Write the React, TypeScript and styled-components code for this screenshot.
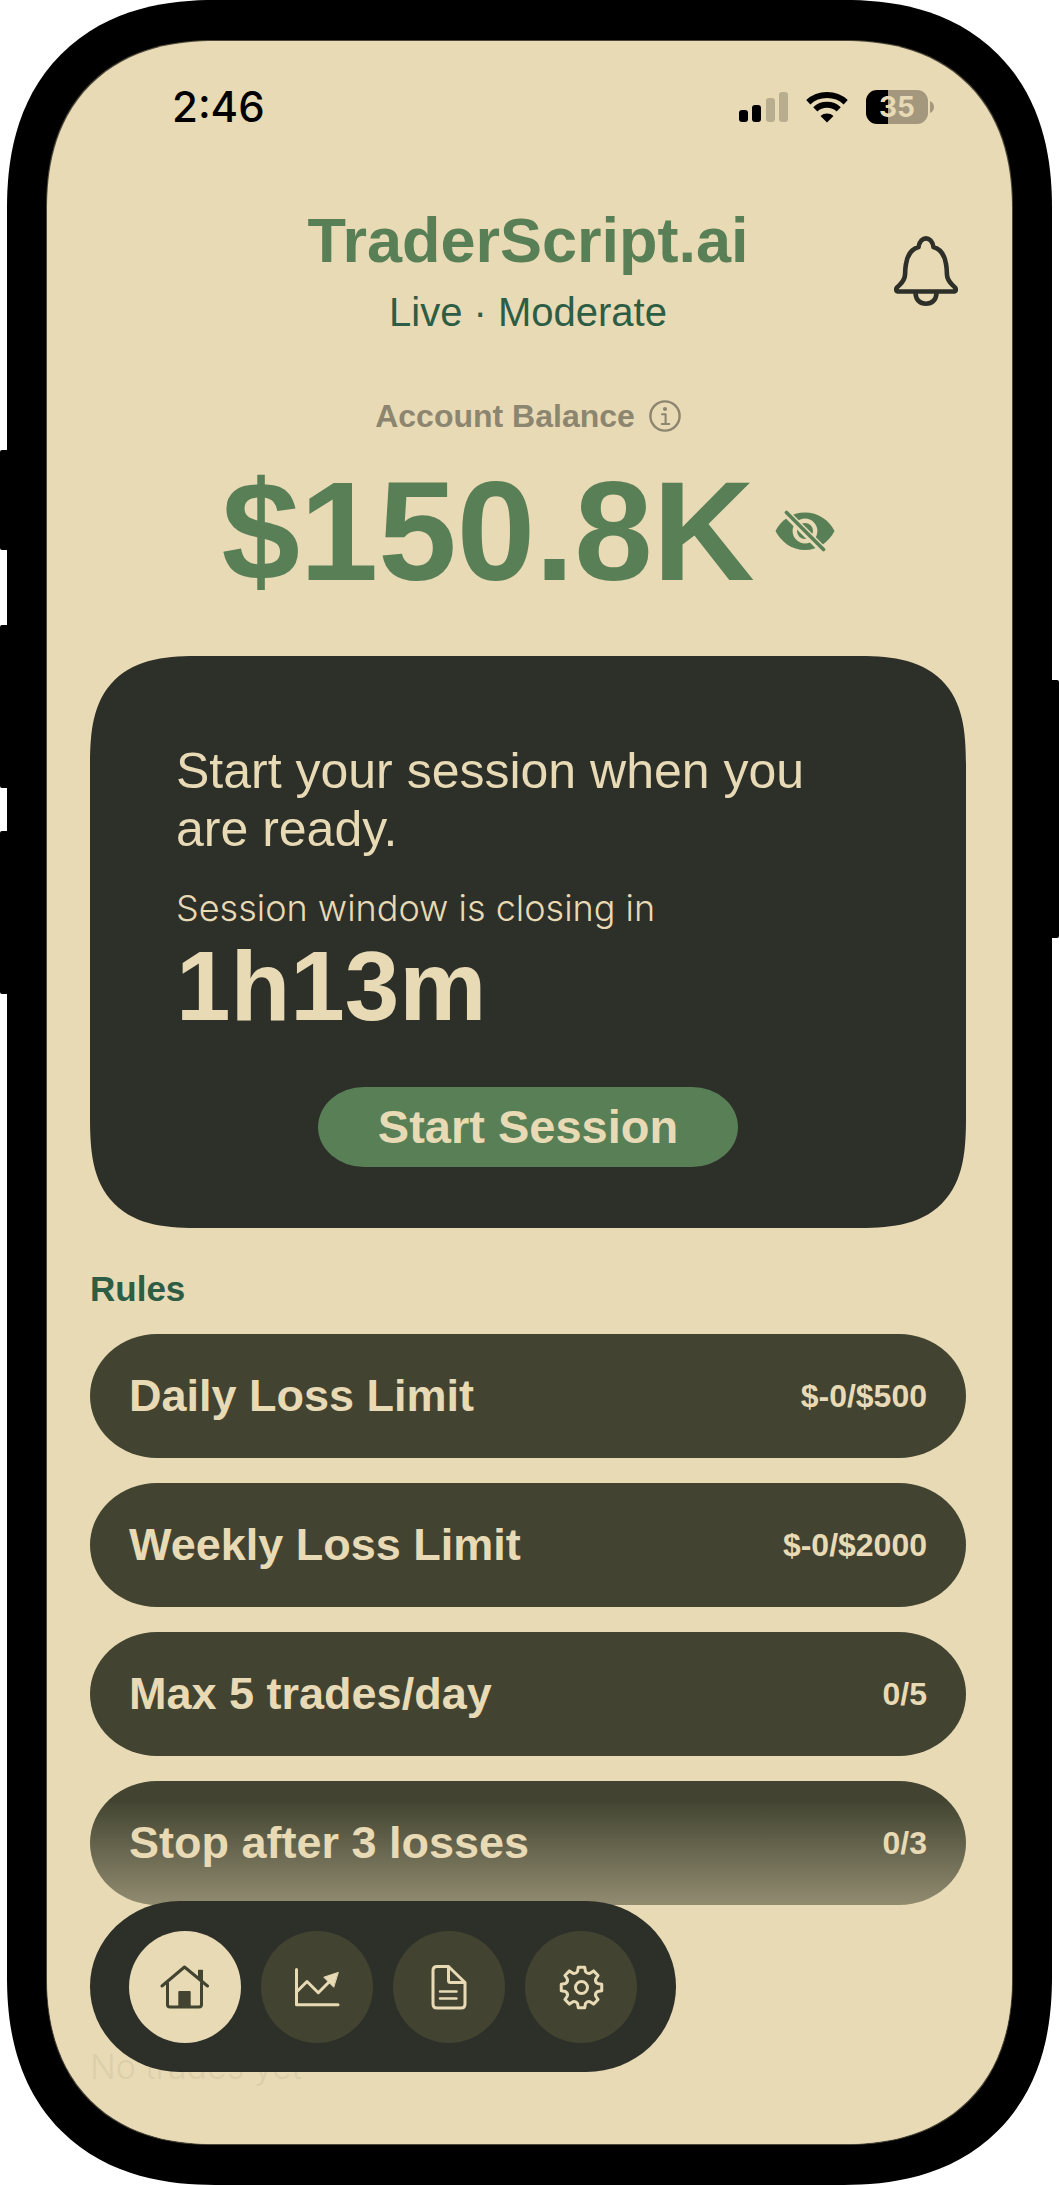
import React from "react";
import styled, { createGlobalStyle } from "styled-components";

const color = {
  cream: "#e8dab5",
  green: "#587f55",
  forest: "#2d5d45",
  ink: "#2d2f29",
  olive: "#424431",
  muted: "#8c8570",
};

const sans = `"Liberation Sans", Arial, Helvetica, sans-serif`;
const system = `Inter, "Liberation Sans", sans-serif`;

const GlobalStyle = createGlobalStyle`
  *, *::before, *::after { box-sizing: border-box; }
  body { margin: 0; background: #fff; font-family: ${sans}; color: ${color.ink}; }
  h1, h2, p, ul { margin: 0; padding: 0; }
  button { border: 0; padding: 0; background: none; font: inherit; color: inherit; cursor: pointer; }
  svg { display: block; }
`;

const Phone = styled.div`
  position: relative;
  margin: 0 7px;
  padding: 41px 40px;
  background: #000;
  border-radius: 190px;
  @supports (corner-shape: squircle) {
    border-radius: 208px;
    corner-shape: superellipse(1.2);
  }
`;

const SideKey = styled.span<{ $side: "left" | "right"; $top: number; $height: number }>`
  position: absolute;
  ${(p) => p.$side}: -7px;
  top: ${(p) => p.$top}px;
  width: 14px;
  height: ${(p) => p.$height}px;
  border-radius: 2px;
  background: #000;
`;

const Screen = styled.div`
  position: relative;
  overflow: hidden;
  background: ${color.cream};
  border-radius: 150px;
  box-shadow: 0 0 0 1px #4c4738;
  @supports (corner-shape: squircle) {
    border-radius: 168px;
    corner-shape: superellipse(1.2);
  }
`;

const StatusBar = styled.div`
  display: flex;
  align-items: center;
  justify-content: space-between;
  height: 132px;
  padding: 0 78px 0 125px;
`;

const Clock = styled.time`
  font: 500 42px/48px ${system};
  color: #000;
`;

const StatusIcons = styled.div`
  display: flex;
  align-items: center;
  gap: 18px;
`;

const Battery = styled.div`
  display: flex;
  align-items: center;
  gap: 2px;
`;

const BatteryBody = styled.div`
  display: grid;
  place-items: center;
  width: 62px;
  height: 34px;
  border-radius: 11px;
  background: linear-gradient(to right, #000 35%, #a3987d 35%);
  font: 700 28px/34px ${system};
  color: ${color.cream};
`;

const Content = styled.main`
  padding: 29px 46px 56px 43px;
`;

const Header = styled.header`
  display: grid;
  grid-template-columns: 1fr auto 1fr;
  align-items: center;
  padding: 0 8px;
`;

const Titles = styled.div`
  grid-column: 2;
  display: flex;
  flex-direction: column;
  align-items: center;
  gap: 6px;
`;

const Brand = styled.h1`
  font-size: 63px;
  line-height: 76px;
  font-weight: 700;
  color: ${color.green};
`;

const Mode = styled.p`
  font-size: 40px;
  line-height: 56px;
  color: ${color.forest};
`;

const BellButton = styled.button`
  justify-self: end;
`;

const Account = styled.section`
  display: flex;
  flex-direction: column;
  align-items: center;
  gap: 15px;
  margin-top: 56px;
`;

const AccountLabel = styled.div`
  display: flex;
  align-items: center;
  gap: 14px;
  color: ${color.muted};
  font-size: 32px;
  line-height: 40px;
  font-weight: 700;
`;

const BalanceRow = styled.div`
  display: flex;
  align-items: center;
  gap: 20px;
  color: ${color.green};
`;

const Balance = styled.p`
  font-size: 141px;
  line-height: 160px;
  font-weight: 700;
`;

const SessionCard = styled.section`
  display: flex;
  flex-direction: column;
  margin-top: 45px;
  padding: 86px 86px 61px;
  background: ${color.ink};
  color: ${color.cream};
  border-radius: 88px;
  @supports (corner-shape: squircle) {
    border-radius: 112px;
    corner-shape: superellipse(1.5);
  }
`;

const Prompt = styled.p`
  font-size: 50px;
  line-height: 58px;
`;

const WindowNote = styled.p`
  margin-top: 25px;
  font: 300 36px/50px ${system};
`;

const Countdown = styled.p`
  margin-top: 3px;
  font-size: 98px;
  line-height: 100px;
  font-weight: 700;
`;

const StartButton = styled.button`
  align-self: center;
  margin-top: 51px;
  padding: 0 60px;
  border-radius: 46px / 40px;
  background: ${color.green};
  font-size: 47px;
  line-height: 80px;
  font-weight: 700;
`;

const SectionTitle = styled.h2`
  margin-top: 41px;
  font-size: 35px;
  line-height: 40px;
  font-weight: 700;
  color: ${color.forest};
`;

const RuleList = styled.ul`
  display: flex;
  flex-direction: column;
  gap: 25px;
  margin-top: 25px;
  list-style: none;
`;

const Rule = styled.li`
  display: flex;
  align-items: center;
  justify-content: space-between;
  height: 124px;
  padding: 0 39px;
  border-radius: 67px / 62px;
  background: ${color.olive};
  color: ${color.cream};
  font-weight: 700;
`;

const RuleName = styled.span`
  font-size: 45px;
  line-height: 54px;
`;

const RuleValue = styled.span`
  font-size: 32px;
  line-height: 40px;
`;

const EmptyNote = styled.p`
  margin-top: 141px;
  font: 300 34px/42px ${system};
  color: ${color.olive};
`;

const Fade = styled.div`
  position: absolute;
  inset: auto 0 0;
  height: 344px;
  pointer-events: none;
  background: linear-gradient(
    to bottom,
    rgba(232, 218, 181, 0) 0,
    rgba(232, 218, 181, 0.48) 105px,
    rgba(232, 218, 181, 0.92) 220px
  );
`;

const TabBar = styled.nav`
  position: absolute;
  left: 43px;
  bottom: 72px;
  display: flex;
  gap: 20px;
  padding: 30px 39px 29px;
  border-radius: 90px / 86px;
  background: ${color.ink};
`;

const Tab = styled.button<{ $active?: boolean }>`
  display: grid;
  place-items: center;
  width: 112px;
  height: 112px;
  border-radius: 50%;
  background: ${(p) => (p.$active ? color.cream : color.olive)};
  color: ${(p) => (p.$active ? color.olive : color.cream)};
`;

const line = {
  fill: "none",
  stroke: "currentColor",
  strokeLinecap: "round" as const,
  strokeLinejoin: "round" as const,
};

const SignalIcon = () => (
  <svg width="49" height="32" viewBox="0 0 49 32" aria-hidden="true">
    <rect x="0" y="19" width="9" height="12" rx="3" fill="#000" />
    <rect x="13" y="14" width="9" height="17" rx="3" fill="#000" />
    <rect x="27" y="7" width="9" height="24" rx="3" fill="#b8ad8e" />
    <rect x="40" y="1" width="9" height="30" rx="3" fill="#b8ad8e" />
  </svg>
);

const WifiIcon = () => (
  <svg width="42" height="32" viewBox="0 0 42 32" fill="none" aria-hidden="true">
    <path d="M2.3 11.2C12.5 1.6 29.5 1.6 39.7 11.2" stroke="#000" strokeWidth="6" />
    <path d="M9.3 18.3C15.6 12.3 26.4 12.3 32.7 18.3" stroke="#000" strokeWidth="6" />
    <path d="M14.5 25C18 21.7 24 21.7 27.5 25L21 31.5Z" fill="#000" />
  </svg>
);

const BellIcon = () => (
  <svg width="64" height="70" viewBox="0 0 64 70" {...line} strokeWidth="4.6" aria-hidden="true">
    <path d="M5 55.5H59C62 55.5 62.5 53.5 61 51.5C58 48 53.5 46 53 39C52.6 35 53 33 52 28C50.5 18 46 13 39.5 11C38.5 5 35 2.4 32 2.4C29 2.4 25.5 5 24.5 11C18 13 13.5 18 12 28C11 33 11.4 35 11 39C10.5 46 6 48 3 51.5C1.5 53.5 2 55.5 5 55.5Z" />
    <path d="M21.5 57.5C22 64 26 67.7 32 67.7C38 67.7 42 64 42.5 57.5" />
  </svg>
);

const InfoIcon = () => (
  <svg width="32" height="32" viewBox="0 0 32 32" {...line} strokeWidth="2.4" aria-hidden="true">
    <circle cx="16" cy="16" r="14.6" />
    <circle cx="16" cy="9" r="2.1" fill="currentColor" stroke="none" />
    <path d="M13 14.2H16.6V23.8M12.8 24H20.2" strokeWidth="2.1" />
  </svg>
);

const EyeOffIcon = () => (
  <svg width="60" height="42" viewBox="0 0 60 42" aria-hidden="true">
    <path d="M0.5 21C6 10 17 2.5 30 2.5S54 10 59.5 21C54 32 43 40 30 40S6 32 0.5 21Z" fill="currentColor" />
    <circle cx="30" cy="21" r="10.2" fill="none" stroke={color.cream} strokeWidth="4.4" />
    <path d="M9 1L50 42" stroke={color.cream} strokeWidth="8" />
    <path d="M11.5 2.5L48.5 39.5" stroke="currentColor" strokeWidth="3.6" strokeLinecap="round" />
  </svg>
);

const HomeIcon = () => (
  <svg width="50" height="45" viewBox="0 0 50 45" {...line} strokeWidth="3" aria-hidden="true">
    <path d="M2 21L24.5 2L47.5 21" />
    <path d="M7.5 18V39.5Q7.5 42 10 42H39Q41.5 42 41.5 39.5V18" />
    <path d="M38 5.5Q38 4.7 38.8 4.7H42.2Q43 4.7 43 5.5V17L38 13Z" fill="currentColor" stroke="none" />
    <path d="M18.3 27Q18.3 26 19.3 26H29.7Q30.7 26 30.7 27V42H18.3Z" fill="currentColor" stroke="none" />
  </svg>
);

const ChartIcon = () => (
  <svg width="45" height="39" viewBox="0 0 45 39" {...line} strokeWidth="3" aria-hidden="true">
    <path d="M1.5 1.5V36.7H43" />
    <path d="M2 23.5L12 13.5L23.3 24.7L36 12" />
    <path d="M43 4.5L28.8 9.2L38.5 19Z" fill="currentColor" strokeWidth="1" />
  </svg>
);

const DocumentIcon = () => (
  <svg width="36" height="45" viewBox="0 0 36 45" {...line} strokeWidth="3" aria-hidden="true">
    <path d="M6 1.5H17.5L34 17.5V39Q34 43 30 43H6Q2 43 2 39V5.5Q2 1.5 6 1.5Z" />
    <path d="M17.5 2V15.5Q17.5 17.5 19.5 17.5H33.5" />
    <path d="M9 26.5H25.5M9 33.5H25.5" strokeWidth="2.5" />
  </svg>
);

const polar = (radius: number, degrees: number) => {
  const a = (degrees * Math.PI) / 180;
  return `${(22.5 + radius * Math.sin(a)).toFixed(2)} ${(22.5 - radius * Math.cos(a)).toFixed(2)}`;
};

// Eight teeth joined by shallow concave valleys.
const gearPath =
  Array.from({ length: 8 }, (_, i) => {
    const a = i * 45;
    return `${i ? "L" : "M"}${polar(16.5, a - 14)}L${polar(20.5, a - 9)}L${polar(20.5, a + 9)}L${polar(16.5, a + 14)}Q${polar(14.5, a + 22.5)} ${polar(16.5, a + 31)}`;
  }).join("") + "Z";

const GearIcon = () => (
  <svg width="45" height="45" viewBox="0 0 45 45" {...line} strokeWidth="3" aria-hidden="true">
    <path d={gearPath} />
    <circle cx="22.5" cy="22.5" r="6" />
  </svg>
);

const sideKeys = [
  { side: "left", top: 450, height: 100 },
  { side: "left", top: 625, height: 163 },
  { side: "left", top: 831, height: 163 },
  { side: "right", top: 680, height: 258 },
] as const;

const rules = [
  { name: "Daily Loss Limit", value: "$-0/$500" },
  { name: "Weekly Loss Limit", value: "$-0/$2000" },
  { name: "Max 5 trades/day", value: "0/5" },
  { name: "Stop after 3 losses", value: "0/3" },
];

const tabs = [
  { label: "Home", Icon: HomeIcon },
  { label: "Performance", Icon: ChartIcon },
  { label: "Journal", Icon: DocumentIcon },
  { label: "Settings", Icon: GearIcon },
];

export default function App() {
  return (
    <>
      <GlobalStyle />
      <Phone>
        {sideKeys.map((k) => (
          <SideKey key={k.top} $side={k.side} $top={k.top} $height={k.height} />
        ))}
        <Screen>
          <StatusBar>
            <Clock>2:46</Clock>
            <StatusIcons>
              <SignalIcon />
              <WifiIcon />
              <Battery>
                <BatteryBody>35</BatteryBody>
                <svg width="4" height="12" viewBox="0 0 4 12" aria-hidden="true">
                  <path d="M0 0Q4 2 4 6T0 12Z" fill="#a3987d" />
                </svg>
              </Battery>
            </StatusIcons>
          </StatusBar>
          <Content>
            <Header>
              <Titles>
                <Brand>TraderScript.ai</Brand>
                <Mode>Live · Moderate</Mode>
              </Titles>
              <BellButton type="button" aria-label="Notifications">
                <BellIcon />
              </BellButton>
            </Header>
            <Account>
              <AccountLabel>
                Account Balance
                <button type="button" aria-label="About account balance">
                  <InfoIcon />
                </button>
              </AccountLabel>
              <BalanceRow>
                <Balance>$150.8K</Balance>
                <button type="button" aria-label="Hide balance">
                  <EyeOffIcon />
                </button>
              </BalanceRow>
            </Account>
            <SessionCard>
              <Prompt>Start your session when you are ready.</Prompt>
              <WindowNote>Session window is closing in</WindowNote>
              <Countdown>1h13m</Countdown>
              <StartButton type="button">Start Session</StartButton>
            </SessionCard>
            <SectionTitle>Rules</SectionTitle>
            <RuleList>
              {rules.map((r) => (
                <Rule key={r.name}>
                  <RuleName>{r.name}</RuleName>
                  <RuleValue>{r.value}</RuleValue>
                </Rule>
              ))}
            </RuleList>
            <EmptyNote>No trades yet</EmptyNote>
          </Content>
          <Fade />
          <TabBar aria-label="Main">
            {tabs.map(({ label, Icon }, i) => (
              <Tab key={label} type="button" aria-label={label} $active={i === 0}>
                <Icon />
              </Tab>
            ))}
          </TabBar>
        </Screen>
      </Phone>
    </>
  );
}
